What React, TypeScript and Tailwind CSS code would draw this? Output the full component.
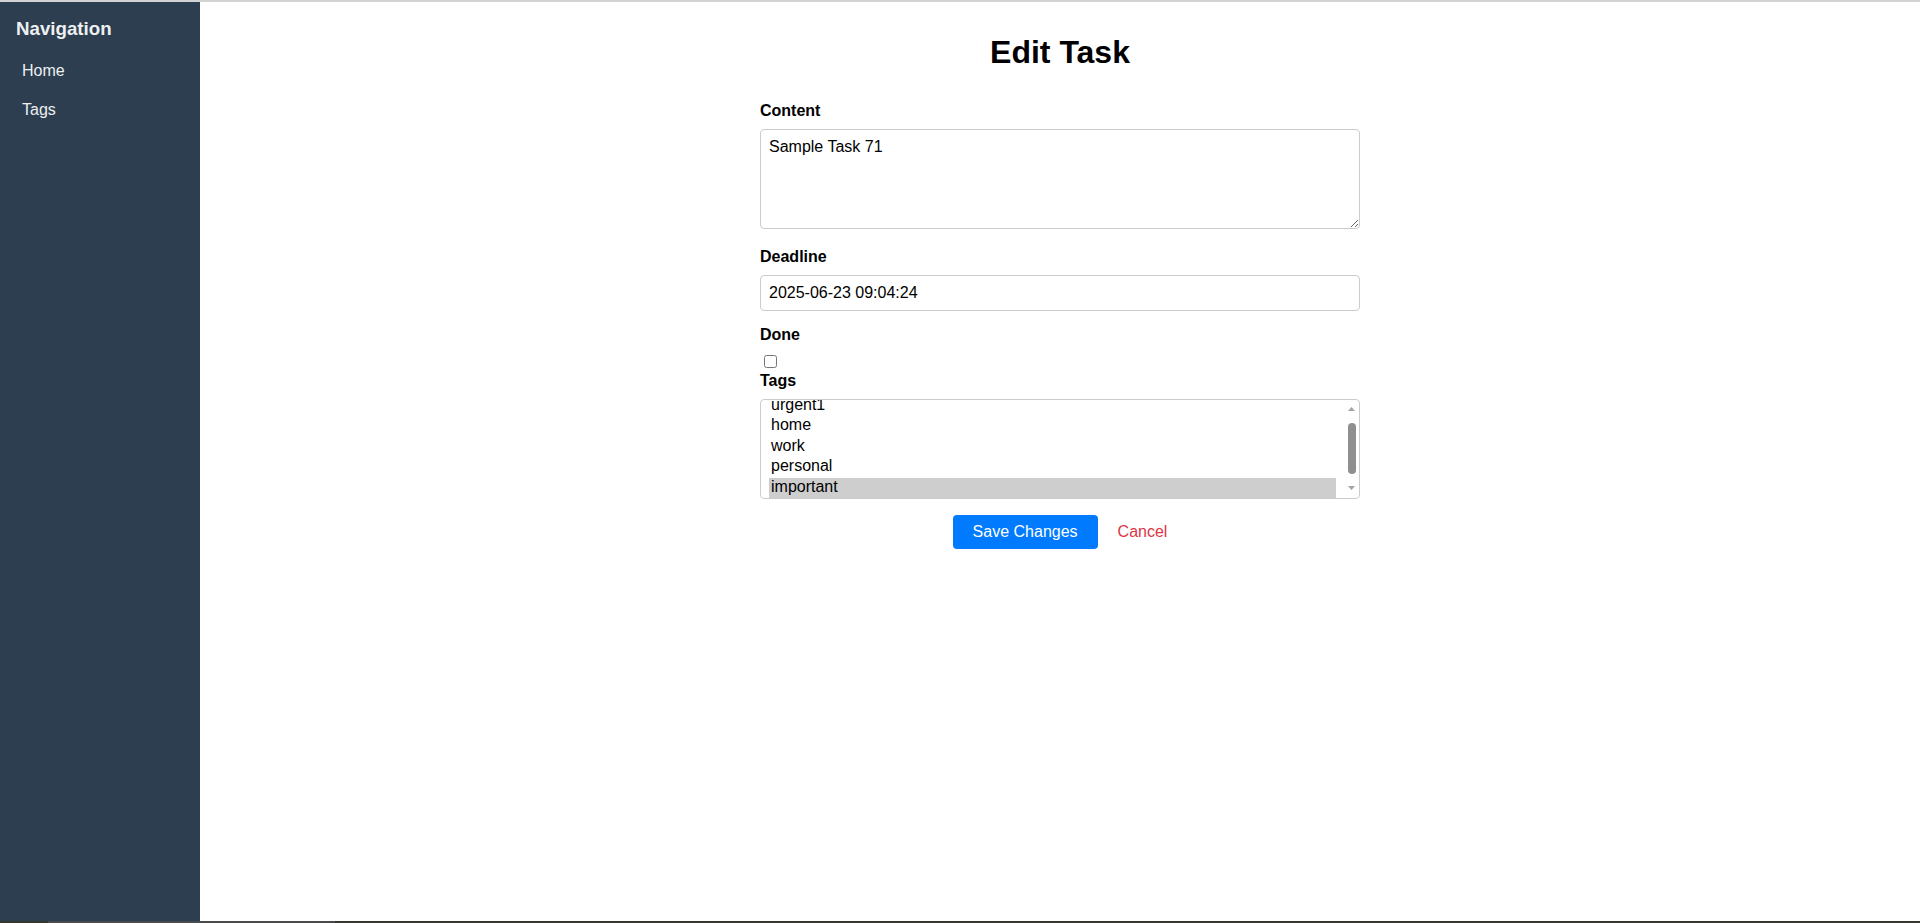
import { useState } from 'react'

const tags = ['urgent1', 'home', 'work', 'personal', 'important']

function Sidebar() {
  return (
    <aside className="w-[200px] shrink-0 bg-[#2c3e50] p-4 text-[#ecf0f1]">
      <h3 className="text-[18.72px] font-bold leading-[21.5px]">Navigation</h3>
      <nav className="mt-[11px] flex flex-col">
        <a href="#" className="block py-[10px] pl-[6px] text-[16px] leading-[19px] text-[#ecf0f1]">
          Home
        </a>
        <a href="#" className="block py-[10px] pl-[6px] text-[16px] leading-[19px] text-[#ecf0f1]">
          Tags
        </a>
      </nav>
    </aside>
  )
}

function TagList({ selected }: { selected: string }) {
  return (
    <div className="flex h-[100px] rounded-[4px] border border-[#cccccc] bg-white">
      {/* options, scrolled to the bottom */}
      <div className="flex flex-1 flex-col justify-end overflow-hidden px-2">
        {tags.map((t) => (
          <div
            key={t}
            className={
              t === selected
                ? 'h-[20.5px] shrink-0 bg-[#cecece] px-[2px] text-[16px] leading-[18.4px] text-black'
                : 'h-[20.5px] shrink-0 px-[2px] text-[16px] leading-[18.4px] text-black'
            }
          >
            {t}
          </div>
        ))}
      </div>
      {/* scrollbar */}
      <div className="flex w-[15px] shrink-0 flex-col items-center pt-[7px] pb-[8px]">
        <svg width="7" height="4" viewBox="0 0 7 4" className="block">
          <polygon points="3.5,0 7,4 0,4" fill="#a3a3a3" />
        </svg>
        <div className="mt-[12px] h-[51px] w-[8px] rounded-full bg-[#8f8f8f]" />
        <div className="flex-1" />
        <svg width="7" height="4" viewBox="0 0 7 4" className="block">
          <polygon points="0,0 7,0 3.5,4" fill="#a3a3a3" />
        </svg>
      </div>
    </div>
  )
}

export default function App() {
  const [content, setContent] = useState('Sample Task 71')
  const [deadline, setDeadline] = useState('2025-06-23 09:04:24')
  const [done, setDone] = useState(false)

  return (
    <div className="flex h-[923px] flex-col bg-white font-['Liberation_Sans',Arial,sans-serif] text-black">
      <div className="h-[2px] shrink-0 bg-[#d2d2d2]" />

      <div className="flex min-h-0 flex-1">
        <Sidebar />

        <main className="flex-1 pt-[32px]">
          <h1 className="mb-[32px] text-center text-[32px] font-bold leading-[36px]">Edit Task</h1>

          <form className="mx-auto w-[600px]" onSubmit={(e) => e.preventDefault()}>
            {/* Content */}
            <label className="mb-[9px] block text-[16px] font-bold leading-[18px]">Content</label>
            <textarea
              value={content}
              onChange={(e) => setContent(e.target.value)}
              className="mb-[19px] block h-[100px] w-full rounded-[4px] border border-[#cccccc] p-2 text-[16px] leading-[18px] text-black outline-none"
            />

            {/* Deadline */}
            <label className="mb-[9px] block text-[16px] font-bold leading-[18px]">Deadline</label>
            <input
              type="text"
              value={deadline}
              onChange={(e) => setDeadline(e.target.value)}
              className="mb-[15px] block h-[36px] w-full rounded-[4px] border border-[#cccccc] px-2 text-[16px] leading-[18px] text-black outline-none"
            />

            {/* Done */}
            <label className="mb-[9px] block text-[16px] font-bold leading-[18px]">Done</label>
            <input
              type="checkbox"
              checked={done}
              onChange={(e) => setDone(e.target.checked)}
              className="mt-[11px] mb-[4px] ml-[4px] block h-[13px] w-[13px]"
            />

            {/* Tags */}
            <label className="mb-[9px] block text-[16px] font-bold leading-[18px]">Tags</label>
            <TagList selected="important" />

            <div className="mt-[16px] flex items-center justify-center">
              <button
                type="submit"
                className="h-[34px] rounded-[4px] bg-[#007bff] px-5 text-[16px] leading-[18px] text-white"
              >
                Save Changes
              </button>
              <a href="#" className="ml-[20px] text-[16px] leading-[18px] text-[#dc3545]">
                Cancel
              </a>
            </div>
          </form>
        </main>
      </div>

      <div className="flex h-[2px] shrink-0 bg-[#35362d]">
        <div className="ml-[48px] w-[287px] bg-[#4a4a4a]" />
      </div>
    </div>
  )
}
